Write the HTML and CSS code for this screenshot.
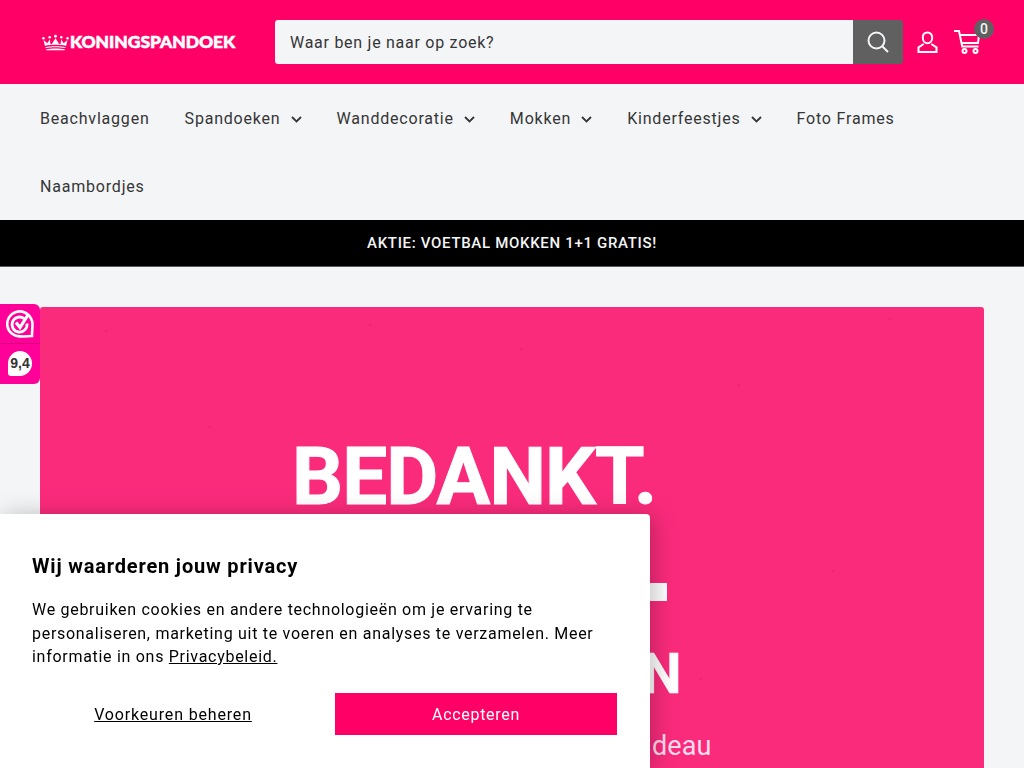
FILE: index.html
```html
<!DOCTYPE html>
<html lang="nl">
<head>
<meta charset="utf-8">
<title>Koningspandoek</title>
<link rel="stylesheet" href="styles.css">
</head>
<body>
<header class="header">
  <a class="logo" href="#">
    <svg class="crown" width="27" height="17" viewBox="0 0 28 16" fill="none" stroke="#fff">
      <g fill="#fff" stroke="none">
        <circle cx="1.5" cy="3.5" r="1.3"/><circle cx="8" cy="2.5" r="1.3"/><circle cx="14" cy="1.5" r="1.5"/><circle cx="20" cy="2.5" r="1.3"/><circle cx="26.5" cy="3.5" r="1.3"/>
        <path d="M3 11.500 1.600 5.500l3.600 3 1-.4L8 4.500l.8 5h1.400l3.800-6 3.800 6h1.400l.8-5 1.800 3.600 1 .4 3.600-3L25 11.500c-6-1.400-16-1.400-22 0z"/>
        <path d="M3.400 12.800c6-1.300 15.200-1.300 21.200 0l-.3 1c-6-1.200-14.600-1.200-20.600 0z"/>
        <path d="M4.200 15c5.600-1 14-1 19.600 0l-.3 1H4.500z"/>
      </g>
    </svg>
    <span class="logo-text">KONINGSPANDOEK</span>
  </a>
  <form class="search">
    <span class="search-input">Waar ben je naar op zoek?</span>
    <span class="search-btn">
      <svg width="22" height="22" viewBox="0 0 22 22" fill="none" stroke="#f3f5f6" stroke-width="2"><circle cx="9.500" cy="9.500" r="8"/><path d="m15.500 15.500 5.500 5.500"/></svg>
    </span>
  </form>
  <a class="account" href="#" aria-label="Account">
    <svg width="21" height="22" viewBox="0 0 21 22" fill="none" stroke="#fff" stroke-width="2"><path d="M10.500 1.500c-3 0-4.700 2.300-4.700 5.200 0 3 2 5.500 4.700 5.500s4.700-2.500 4.700-5.500c0-2.900-1.700-5.200-4.700-5.200z"/><path d="M6.700 13 1.500 16.300V21h18v-4.700L14.300 13"/></svg>
  </a>
  <a class="cart" href="#" aria-label="Winkelwagen">
    <svg width="26" height="24" viewBox="0 0 26 24" fill="none" stroke="#fff" stroke-width="2"><path d="M0 1h5l3.200 15.500h16.300"/><path d="M6 5h19l-1 8H8"/><circle cx="10.500" cy="21" r="2"/><circle cx="21.500" cy="21" r="2"/></svg>
    <span class="cart-count">0</span>
  </a>
</header>

<nav class="nav">
  <a class="nav-item" href="#">Beachvlaggen</a>
  <a class="nav-item" href="#">Spandoeken<svg class="chev" width="11" height="7" viewBox="0 0 11 7" fill="none" stroke="#363636" stroke-width="1.800"><path d="m1 1 4.500 4.500L10 1"/></svg></a>
  <a class="nav-item" href="#">Wanddecoratie<svg class="chev" width="11" height="7" viewBox="0 0 11 7" fill="none" stroke="#363636" stroke-width="1.800"><path d="m1 1 4.500 4.500L10 1"/></svg></a>
  <a class="nav-item" href="#">Mokken<svg class="chev" width="11" height="7" viewBox="0 0 11 7" fill="none" stroke="#363636" stroke-width="1.800"><path d="m1 1 4.500 4.500L10 1"/></svg></a>
  <a class="nav-item" href="#">Kinderfeestjes<svg class="chev" width="11" height="7" viewBox="0 0 11 7" fill="none" stroke="#363636" stroke-width="1.800"><path d="m1 1 4.500 4.500L10 1"/></svg></a>
  <a class="nav-item" href="#">Foto Frames</a>
  <a class="nav-item" href="#">Naambordjes</a>
</nav>

<div class="announce">AKTIE: VOETBAL MOKKEN 1+1 GRATIS!</div>

<main class="main">
  <section class="hero">
    <div class="hero-title">BEDANKT.</div>
    <div class="hero-bar"></div>
    <div class="hero-line">N</div>
    <div class="hero-sub">deau</div>
  </section>
</main>

<aside class="rating">
  <div class="rating-top">
    <svg width="28" height="28" viewBox="0 0 28 28" fill="none" stroke="#fff">
      <path d="M26 26c-4 .4-8 .6-12 .4A12.500 12.500 0 1 1 25 8.500c1.200 2 1.500 4 1.500 6 0 4-.6 8-.5 11.500z" stroke-width="2.600"/>
      <path d="M18 8.500a7.500 7.500 0 1 0 3 5" stroke-width="2.800"/>
      <path d="m10 12.500 4 5L22.500 4" stroke-width="3.200"/>
    </svg>
  </div>
  <div class="rating-score">9,4</div>
</aside>

<section class="cookie">
  <h2 class="cookie-title">Wij waarderen jouw privacy</h2>
  <p class="cookie-text">We gebruiken cookies en andere technologieën om je ervaring te personaliseren, marketing uit te voeren en analyses te verzamelen. Meer informatie in ons <a href="#">Privacybeleid.</a></p>
  <div class="cookie-actions">
    <a class="cookie-link" href="#">Voorkeuren beheren</a>
    <a class="cookie-accept" href="#">Accepteren</a>
  </div>
</section>
</body>
</html>
```
FILE: styles.css
```css
* { box-sizing: border-box; }
html, body { margin: 0; height: 768px; overflow: hidden; }
body { background: #f3f5f6; font-family: "Roboto", "Liberation Sans", sans-serif; color: #363636; }
a { color: inherit; text-decoration: none; }

.header { height: 84px; background: #ff0066; display: flex; align-items: center; padding: 0 40px 0 42px; }
.logo { width: 233px; display: flex; align-items: center; gap: 1px; flex: none; }
.crown { flex: none; }
.logo-text { font-family: "Lato", sans-serif; font-weight: 900; font-size: 17.500px; color: #fff; letter-spacing: -.07px; line-height: 20px; -webkit-text-stroke: .6px #fff; }
.search { width: 628px; height: 44px; display: flex; flex: none; border-radius: 3px; overflow: hidden; }
.search-input { flex: 1; background: #f3f5f6; font-size: 16px; letter-spacing: .73px; line-height: 46px; padding-left: 15px; color: #363636; }
.search-btn { width: 50px; background: #606060; display: flex; align-items: center; justify-content: center; }
.account { margin-left: 14px; display: flex; }
.cart { margin-left: 16px; display: flex; position: relative; }
.cart-count { position: absolute; top: -11px; left: 20px; width: 20px; height: 20px; border-radius: 50%; background: #606060; color: #f3f5f6; font-size: 14px; font-weight: 500; line-height: 20px; text-align: center; }

.nav { height: 136px; display: flex; flex-wrap: wrap; column-gap: 35px; padding: 0 40px; align-content: flex-start; }
.nav-item { height: 68px; display: flex; align-items: center; font-size: 16px; letter-spacing: .8px; color: #363636; white-space: pre; }
.chev { margin-left: 10px; margin-top: 2px; }

.announce { height: 47px; background: #000; border-bottom: 1px solid #5c5c5c; color: #f3f5f6; text-align: center; font-size: 15px; font-weight: 500; letter-spacing: .68px; line-height: 46px; }

.main { padding: 40px 40px 0; }
.hero { height: 600px; border-radius: 3px; display: flex; flex-direction: column; align-items: flex-start;
  background-color: #fb2b7c;
  background-image:
    radial-gradient(circle 2px at 7% 4%, #e8246f, transparent),
    radial-gradient(circle 2px at 35% 3%, #e8246f, transparent),
    radial-gradient(circle 2px at 51% 7%, #e8246f, transparent),
    radial-gradient(circle 2px at 74% 13%, #e8246f, transparent),
    radial-gradient(circle 2px at 90% 2%, #e8246f, transparent),
    radial-gradient(circle 2px at 18% 20%, #e8246f, transparent),
    radial-gradient(circle 2px at 62% 28%, #e8246f, transparent),
    radial-gradient(circle 2px at 84% 44%, #e8246f, transparent),
    radial-gradient(circle 2px at 70% 62%, #e8246f, transparent);
}
.hero-title { margin: 126px 0 0 252px; font-family: "Roboto", sans-serif; font-weight: 700; font-size: 80px; line-height: 88px; color: #fff; letter-spacing: -.9px; -webkit-text-stroke: 1px #fff; }
.hero-bar { margin: 62px 0 0 560px; width: 67px; height: 18px; background: #fff; }
.hero-line { margin: 43px 0 0 602px; font-family: "Roboto", sans-serif; font-weight: 700; font-size: 56px; line-height: 60px; color: #fff; -webkit-text-stroke: .6px #fff; }
.hero-sub { margin: 24px 0 0 612px; font-size: 27px; line-height: 36px; color: #fde; letter-spacing: .1px; }

.rating { position: fixed; left: 0; top: 304px; width: 40px; height: 80px; background: #ff0099; border-radius: 0 6px 6px 0; }
.rating-top { height: 40px; display: flex; align-items: center; justify-content: center; border-bottom: 1px solid #d6007f; }
.rating-score { margin: 7px 0 0 8px; width: 24px; height: 25px; border-radius: 50% 50% 50% 3px; background: #fff; color: #333; font-family: "Liberation Sans", sans-serif; font-size: 14px; font-weight: 700; line-height: 24px; text-align: center; }

.cookie { position: fixed; left: 0; top: 514px; bottom: 0; width: 650px; background: #fff; border-radius: 0 4px 0 0; box-shadow: 4px 2px 24px rgba(0,0,0,.25); padding: 38px 33px 0 32px; color: #000; }
.cookie-title { margin: 0; font-size: 20px; font-weight: 700; line-height: 28px; letter-spacing: .82px; }
.cookie-text { margin: 18px 0 0; font-size: 16px; line-height: 23.500px; letter-spacing: .71px; }
.cookie-text a { text-decoration: underline; }
.cookie-actions { display: flex; align-items: center; margin-top: 24px; }
.cookie-link { width: 282px; text-align: center; font-size: 16px; letter-spacing: .83px; text-decoration: underline; margin-right: 21px; padding-top: 2px; }
.cookie-accept { width: 282px; height: 42px; background: #ff0066; color: #fff; font-size: 16px; letter-spacing: .7px; line-height: 44px; text-align: center; }
```
